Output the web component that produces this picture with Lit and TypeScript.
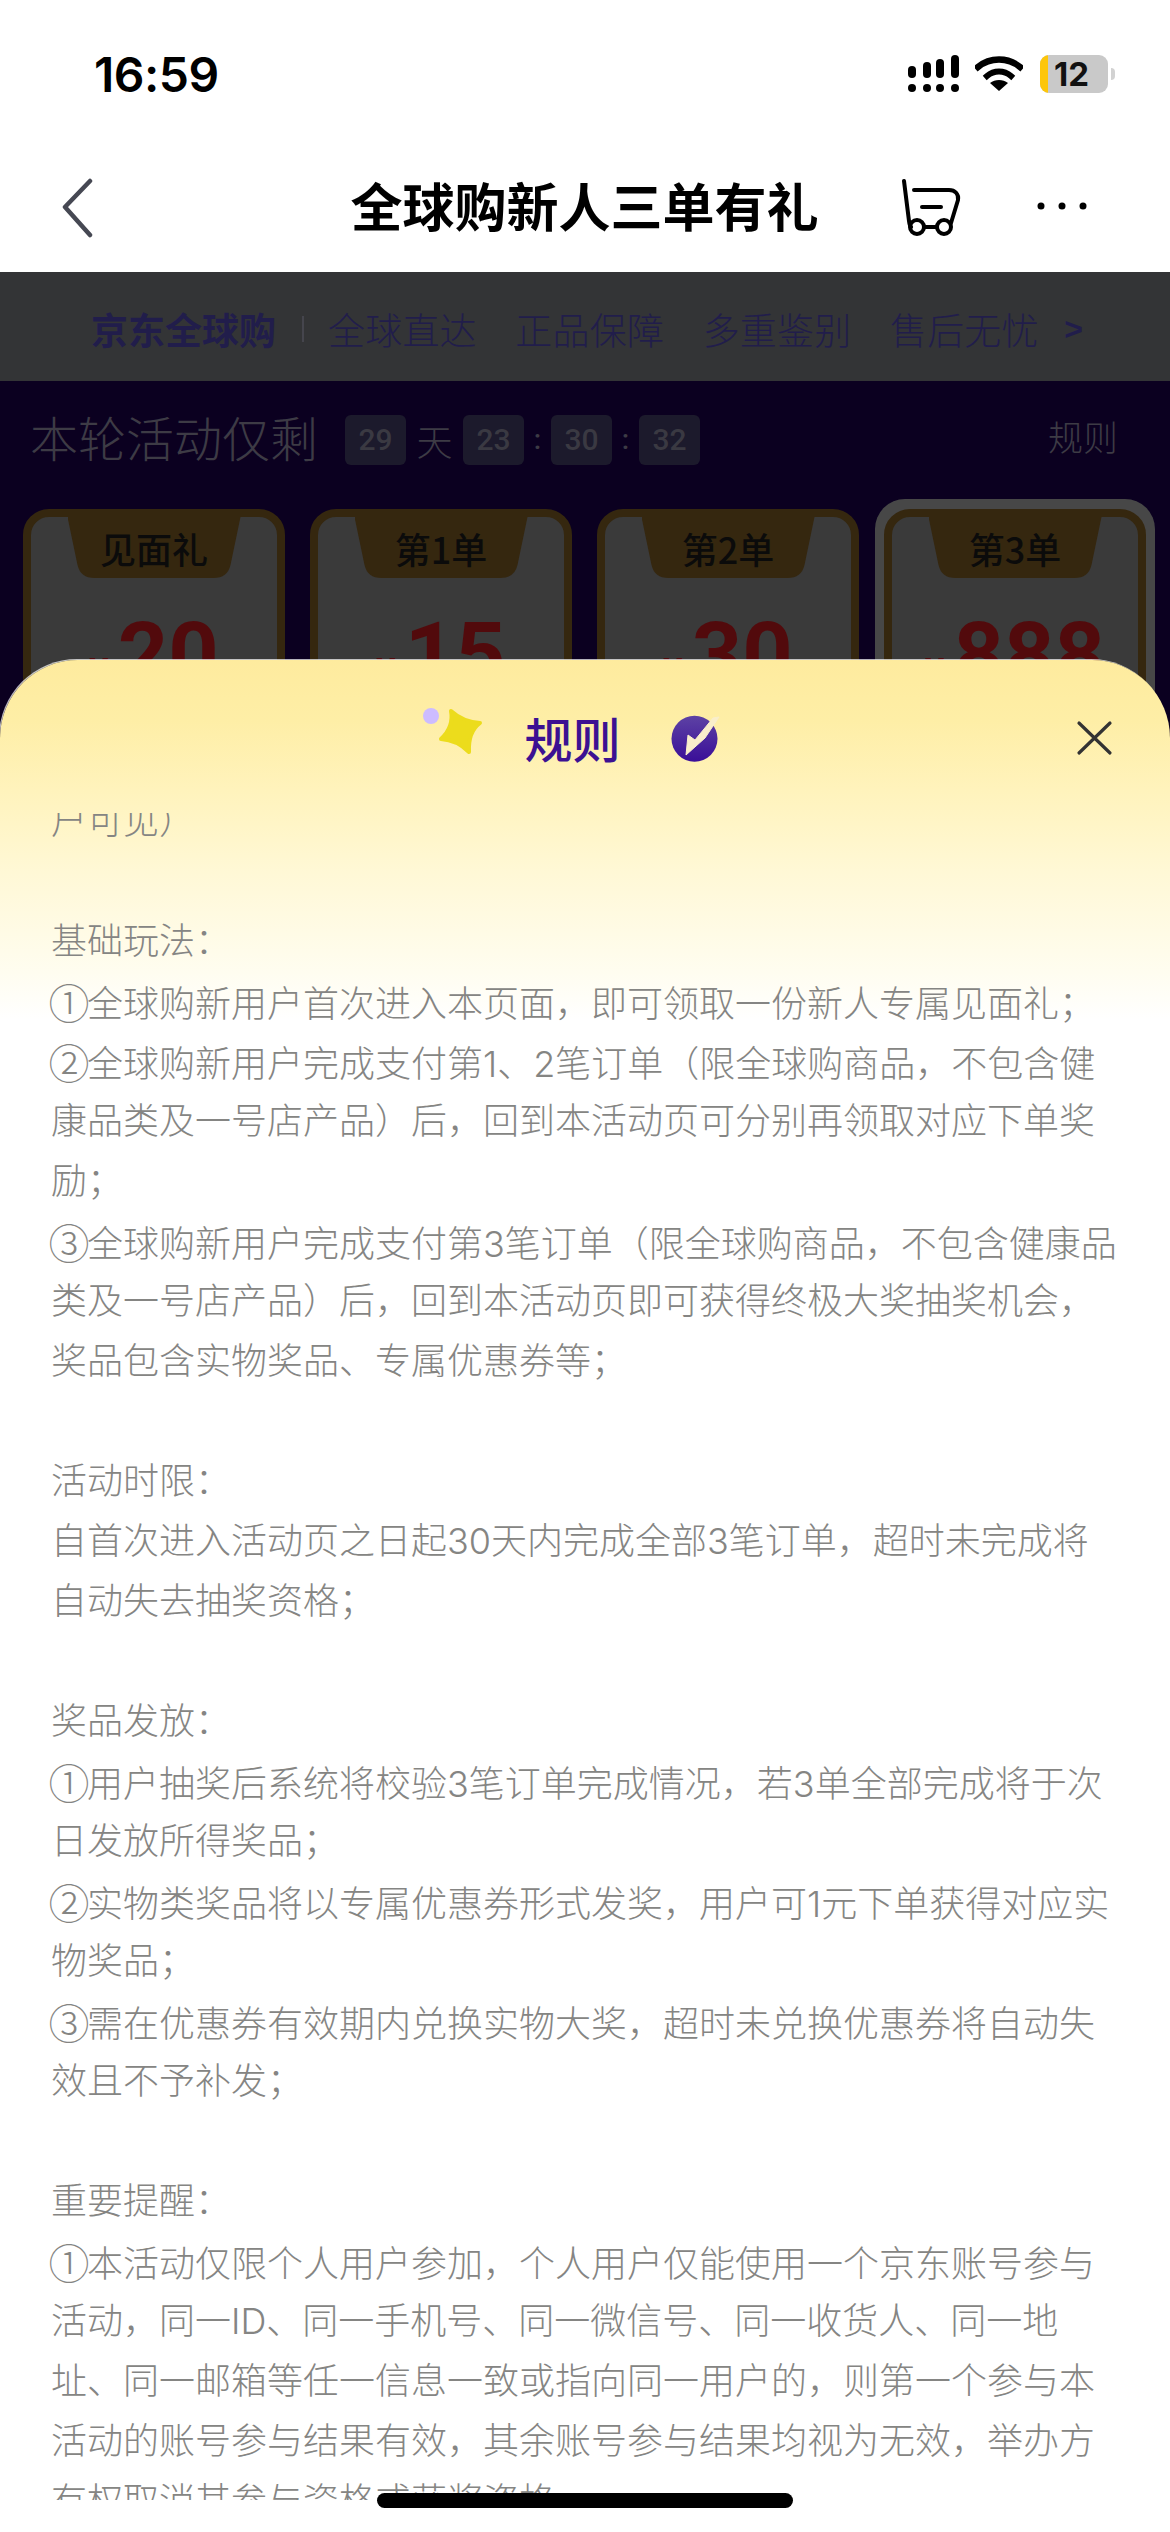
import { LitElement, html, css } from "lit";
import { customElement } from "lit/decorators.js";

const LINES = [
  "户可见）",
  "",
  "基础玩法：",
  "①全球购新用户首次进入本页面，即可领取一份新人专属见面礼；",
  "②全球购新用户完成支付第1、2笔订单（限全球购商品，不包含健",
  "康品类及一号店产品）后，回到本活动页可分别再领取对应下单奖",
  "励；",
  "③全球购新用户完成支付第3笔订单（限全球购商品，不包含健康品",
  "类及一号店产品）后，回到本活动页即可获得终极大奖抽奖机会，",
  "奖品包含实物奖品、专属优惠券等；",
  "",
  "活动时限：",
  "自首次进入活动页之日起30天内完成全部3笔订单，超时未完成将",
  "自动失去抽奖资格；",
  "",
  "奖品发放：",
  "①用户抽奖后系统将校验3笔订单完成情况，若3单全部完成将于次",
  "日发放所得奖品；",
  "②实物类奖品将以专属优惠券形式发奖，用户可1元下单获得对应实",
  "物奖品；",
  "③需在优惠券有效期内兑换实物大奖，超时未兑换优惠券将自动失",
  "效且不予补发；",
  "",
  "重要提醒：",
  "①本活动仅限个人用户参加，个人用户仅能使用一个京东账号参与",
  "活动，同一ID、同一手机号、同一微信号、同一收货人、同一地",
  "址、同一邮箱等任一信息一致或指向同一用户的，则第一个参与本",
  "活动的账号参与结果有效，其余账号参与结果均视为无效，举办方",
  "有权取消其参与资格或获奖资格",
];

const CARDS = [
  { tab: "见面礼", amount: "20" },
  { tab: "第1单", amount: "15" },
  { tab: "第2单", amount: "30" },
  { tab: "第3单", amount: "888", hot: true },
];

@customElement("app-root")
export class AppRoot extends LitElement {
  static styles = css`
    :host {
      display: block;
      position: relative;
      width: 1170px;
      height: 2532px;
      overflow: hidden;
      background: #fff;
      font-family: "Noto Sans CJK SC", "Noto Sans", sans-serif;
    }
    .status {
      height: 142px;
      box-sizing: border-box;
      padding: 55px 55px 0 94px;
      display: flex;
      justify-content: space-between;
      align-items: flex-start;
    }
    .time {
      font: 600 48px/40px Inter, sans-serif;
      color: #000;
      letter-spacing: -0.5px;
    }
    .sys { display: flex; align-items: flex-start; }
    .sys svg { display: block; }
    .wifi { margin-left: 16px; }
    .battery {
      margin-left: 17px;
      width: 68px;
      height: 38px;
      border-radius: 9px;
      background: #c9c9c9;
      overflow: hidden;
      display: flex;
      align-items: center;
      font: 700 33px/38px Inter, sans-serif;
      color: #111;
    }
    .battery i { width: 8px; height: 38px; background: #fdc60a; display: block; margin-right: 6px; }
    .nub { width: 4px; height: 12px; margin: 13px 0 0 3px; background: #d2d2d2; border-radius: 0 6px 6px 0; }
    .nav {
      height: 130px;
      position: relative;
      display: flex;
      align-items: center;
      justify-content: center;
    }
    .title {
      font-size: 52px;
      font-weight: 700;
      line-height: 60px;
      color: #000;
      margin-left: -1px;
      margin-top: -4px;
    }
    .nav svg { position: absolute; display: block; }
    .back { left: 60px; top: 36px; }
    .cart { left: 900px; top: 37px; }
    .more { left: 1034px; top: 57px; }

    .banner {
      height: 109px;
      background: #333436;
      box-sizing: border-box;
      padding: 5px 0 0 91px;
      display: flex;
      align-items: center;
      color: #211d4b;
      font-size: 37px;
      font-weight: 300;
      white-space: nowrap;
    }
    .brand { font-size: 37px; font-weight: 700; }
    .sep { width: 2px; height: 26px; background: #45454d; margin: 0 24px 0 26px; }
    .b-item { margin-right: 38.5px; letter-spacing: 0.2px; }
    .b-arrow { margin: 0 0 0 -13px; font-size: 32px; font-weight: 700; font-family: "Liberation Sans", sans-serif; }

    .main {
      background: #0b0020;
      height: 1500px;
      box-sizing: border-box;
      padding: 34px 14px 0 23px;
    }
    .count {
      height: 50px;
      display: flex;
      align-items: center;
      color: #3d3b45;
      white-space: nowrap;
      margin-left: 7px;
      margin-right: 38px;
    }
    .count .lead { font-size: 48px; font-weight: 300; line-height: 50px; margin: -8px 27px 0 0; }
    .box {
      width: 61px;
      height: 50px;
      border-radius: 6px;
      background: #1c1a2c;
      display: flex;
      align-items: center;
      justify-content: center;
      font: 500 30px/50px Roboto, sans-serif;
      color: #3a3942;
    }
    .unit { font-size: 36px; font-weight: 300; width: 57px; text-align: center; }
    .colon { width: 27px; text-align: center; font: 500 28px/44px Roboto, sans-serif; }
    .rule { margin-left: auto; font-size: 35px; font-weight: 300; margin-top: -10px; }
    .cards {
      margin-top: 44px;
      display: flex;
      gap: 25px;
      align-items: flex-start;
    }
    .cardwrap { flex: 0 0 auto; }
    .cardwrap.hot {
      margin: -10px 0 0 -9px;
      padding: 10px 9px;
      background: #474747;
      border-radius: 30px;
    }
    .card {
      width: 262px;
      height: 300px;
      box-sizing: border-box;
      background: #3a3a3a;
      border: 8px solid #35270f;
      border-radius: 26px;
      display: flex;
      flex-direction: column;
      align-items: center;
      overflow: hidden;
    }
    .tab {
      width: 173px;
      height: 61px;
      background: #35270f;
      clip-path: path("M0 0 L173 0 L163 48 Q160 61 146 61 L27 61 Q13 61 10 48 Z");
      display: flex;
      align-items: center;
      justify-content: center;
      font-size: 36px;
      font-weight: 500;
      line-height: 56px;
      color: #0b0b0b;
    }
    .amount {
      margin-top: 34px;
      display: flex;
      align-items: baseline;
      color: #520a0c;
      font-family: Roboto, sans-serif;
      font-weight: 700;
      line-height: 84px;
    }
    .amount small { font-size: 36px; margin-right: 9px; }
    .amount b { font-size: 88px; font-weight: 700; }

    .sheet {
      position: absolute;
      left: 0;
      right: 0;
      top: 660px;
      bottom: 0;
      border-radius: 78px 78px 0 0;
      background: linear-gradient(180deg, #feeb9e 0, #feeea6 60px, #fff3bc 130px, #fff8d6 213px, #fffdf0 313px, #fff 360px);
      box-shadow: -1px -1px 0 rgba(255, 255, 255, 0.7);
    }
    .head {
      height: 153px;
      position: relative;
      display: flex;
      justify-content: center;
      padding: 47px 25px 0 0;
      box-sizing: border-box;
    }
    .head h2 {
      margin: 0;
      font-size: 48px;
      font-weight: 500;
      line-height: 60px;
      color: #3c1192;
    }
    .head svg { position: absolute; display: block; }
    .star { left: 421px; top: 44px; }
    .check { left: 665px; top: 48px; }
    .close { left: 1076px; top: 60px; }
    .scroll {
      height: 1687px;
      overflow: hidden;
      padding: 0 0 0 51px;
    }
    .text {
      margin-top: -22px;
      font-family: Inter, "Noto Sans CJK SC", sans-serif;
      font-size: 36px;
      font-weight: 300;
      line-height: 60px;
      color: #858583;
      white-space: nowrap;
    }
    .line { height: 60px; }
    .circ {
      display: inline-block;
      width: 36px;
      text-align: center;
      font-family: "Noto Sans CJK SC", sans-serif;
      transform: scale(1.14);
    }
    .home {
      position: absolute;
      left: 377px;
      top: 2493px;
      width: 416px;
      height: 15px;
      border-radius: 8px;
      background: #000;
    }
  `;

  private renderLine(l: string) {
    if (/^[①②③]/.test(l)) {
      return html`<div class="line"><span class="circ">${l[0]}</span>${l.slice(1)}</div>`;
    }
    return html`<div class="line">${l}</div>`;
  }

  render() {
    return html`
      <div class="status">
        <div class="time">16:59</div>
        <div class="sys">
          <svg width="51" height="37" viewBox="0 0 51 37" fill="#000">
            <rect x="0" y="11" width="8" height="12" rx="4"/><rect x="15" y="7" width="8" height="16" rx="4"/>
            <rect x="28" y="4" width="8" height="19" rx="4"/><rect x="43" y="0" width="8" height="23" rx="4"/>
            <rect x="0" y="29" width="8" height="8" rx="4"/><rect x="15" y="29" width="8" height="8" rx="4"/>
            <rect x="28" y="29" width="8" height="8" rx="4"/><rect x="43" y="29" width="8" height="8" rx="4"/>
          </svg>
          <svg class="wifi" width="48" height="36" viewBox="0 0 48 36" fill="none" stroke="#000">
            <path d="M3 12 C15 2 33 2 45 12" stroke-width="6.5" stroke-linecap="square"/>
            <path d="M12 21 C19 15 29 15 36 21" stroke-width="6" stroke-linecap="square"/>
            <path d="M24 36 L15 28 C20 24 28 24 33 28 Z" fill="#000" stroke="none"/>
          </svg>
          <div class="battery"><i></i>12</div>
          <div class="nub"></div>
        </div>
      </div>
      <div class="nav">
        <svg class="back" width="34" height="60" viewBox="0 0 34 60" fill="none" stroke="#464853" stroke-width="4.5" stroke-linecap="round" stroke-linejoin="round"><path d="M30 3 L5 29 L30 57"/></svg>
        <div class="title">全球购新人三单有礼</div>
        <svg class="cart" width="62" height="58" viewBox="0 0 62 58" fill="none" stroke="#000" stroke-width="4" stroke-linecap="round" stroke-linejoin="round">
          <path d="M4 2 L9 42 C9.5 46 10 47 11 48"/>
          <path d="M14 11 L49 11 C55 11 59 15 58 21 L51 44"/>
          <path d="M22 28 L41 28"/>
          <circle cx="17" cy="48" r="7"/><circle cx="44" cy="48" r="7"/>
          <path d="M24 48 L37 48"/>
        </svg>
        <svg class="more" width="56" height="14" viewBox="0 0 56 14" fill="#000"><circle cx="7" cy="7" r="3.5"/><circle cx="28" cy="7" r="3.5"/><circle cx="49" cy="7" r="3.5"/></svg>
      </div>
      <div class="banner">
        <span class="brand">京东全球购</span><span class="sep"></span>
        <span class="b-item">全球直达</span><span class="b-item">正品保障</span><span class="b-item">多重鉴别</span><span class="b-item">售后无忧</span>
        <span class="b-arrow">&gt;</span>
      </div>
      <div class="main">
        <div class="count">
          <span class="lead">本轮活动仅剩</span>
          <span class="box">29</span><span class="unit">天</span>
          <span class="box">23</span><span class="colon">:</span>
          <span class="box">30</span><span class="colon">:</span>
          <span class="box">32</span>
          <span class="rule">规则</span>
        </div>
        <div class="cards">
          ${CARDS.map(
            (c) => html`
              <div class="cardwrap ${c.hot ? "hot" : ""}">
                <div class="card">
                  <div class="tab">${c.tab}</div>
                  <div class="amount"><small>¥</small><b>${c.amount}</b></div>
                </div>
              </div>
            `
          )}
        </div>
      </div>
      <div class="sheet">
        <div class="head">
          <svg class="star" width="64" height="54" viewBox="0 0 64 54">
            <circle cx="10" cy="12" r="8" fill="#cdbcff"/>
            <path d="M30 7 Q42 18 59 19 Q47 28 48 48 Q36 36 20 35 Q33 23 30 7 Z" fill="#ecdc1c" stroke="#ecdc1c" stroke-width="4" stroke-linejoin="round"/>
          </svg>
          <h2>规则</h2>
          <svg class="check" width="60" height="56" viewBox="0 0 60 56">
            <defs><linearGradient id="cg" x1="0" y1="0" x2="0" y2="1"><stop offset="0" stop-color="#5d42a4"/><stop offset="1" stop-color="#3a0e98"/></linearGradient></defs>
            <circle cx="29.5" cy="30.7" r="23" fill="url(#cg)"/>
            <path d="M54 9 L48 10 L30 32 L23 27 L21 47 L40 30 Z" fill="#f9eecb" stroke="#f9eecb" stroke-linejoin="round"/>
          </svg>
          <svg class="close" width="37" height="36" viewBox="0 0 37 36" stroke="#333" stroke-width="3.2" stroke-linecap="round"><path d="M3 3 L34 33 M34 3 L3 33"/></svg>
        </div>
        <div class="scroll">
          <div class="text">
            ${LINES.map((l) => this.renderLine(l))}
          </div>
        </div>
      </div>
      <div class="home"></div>
    `;
  }
}
